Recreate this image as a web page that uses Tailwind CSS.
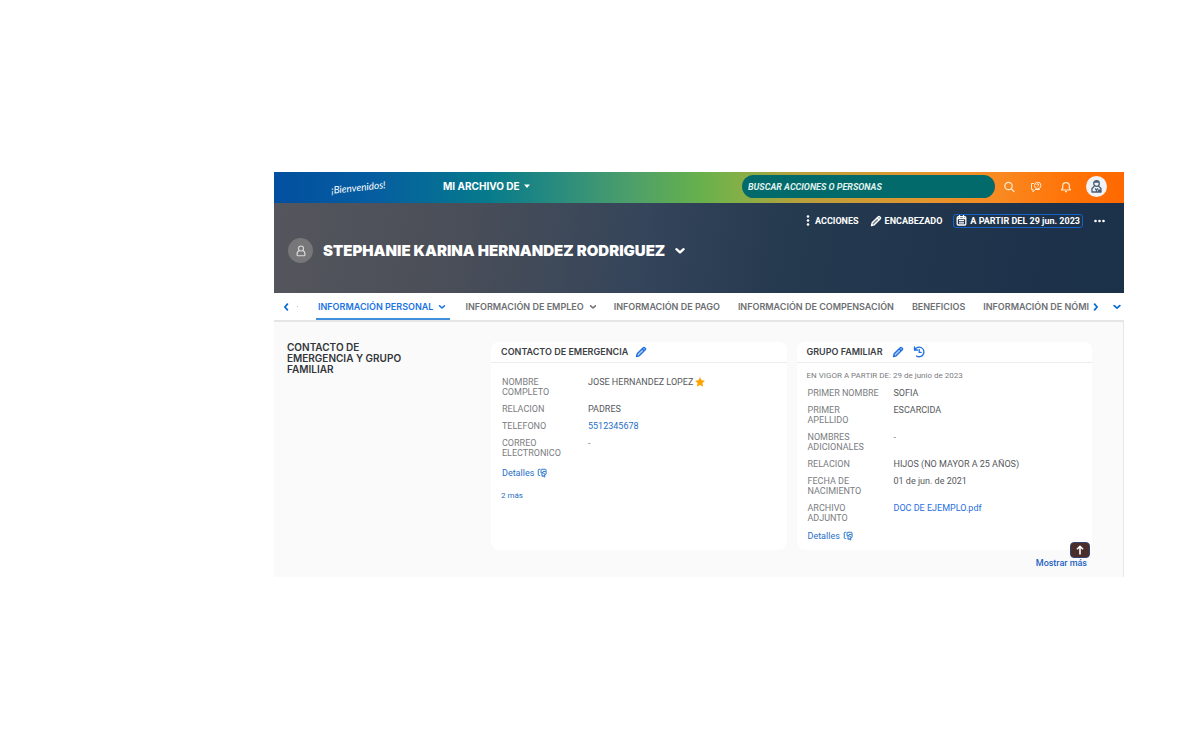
<!DOCTYPE html>
<html lang="es">
<head>
<meta charset="utf-8">
<title>Mi archivo de empleado</title>
<script src="https://cdn.jsdelivr.net/npm/@tailwindcss/browser@4"></script>
</head>
<body class="bg-white font-['Roboto',sans-serif] text-[9px] leading-[10px] text-[#4a4d52]">
<svg class="hidden">
  <symbol id="pencil" viewBox="0 0 16 16"><path d="M2 14l.9-3.600L11 2.300a1.300 1.300 0 0 1 1.900 0l.8.8a1.300 1.300 0 0 1 0 1.900L5.600 13.100z" fill="currentColor" fill-opacity=".35" stroke="currentColor" stroke-width="1.800" stroke-linejoin="round"/><path d="M9.500 3.800l2.700 2.700" fill="none" stroke="currentColor" stroke-width="1.800"/></symbol>
  <symbol id="down" viewBox="0 0 10 10"><path d="M3 4l2 1.800L7 4" fill="none" stroke="currentColor" stroke-width="1.300" stroke-linecap="round" stroke-linejoin="round"/></symbol>
  <symbol id="details" viewBox="0 0 16 16"><path d="M5 12H3.500A1.500 1.500 0 0 1 2 10.500v-7A1.500 1.500 0 0 1 3.500 2H5M7 2h6a1.500 1.500 0 0 1 1.500 1.500V10M6.500 2v6.500M9.500 5.500h4.500M8 6.500v7l2-1.500 1.300 2.500 1.500-.8-1.300-2.400 2.500-.5z" fill="none" stroke="currentColor" stroke-width="1.500" stroke-linejoin="round"/></symbol>
</svg>
<main class="pt-[172px] pr-[76px] pl-[274px]">
  <header class="flex h-[31px] items-center pr-[17px] pb-[2px] pl-[57px] text-white" style="background-image:linear-gradient(90deg,#024f9f 0%,#065ea0 12%,#067a8c 25%,#2c8d7d 34%,#4d9f6a 42%,#66b04c 50%,#7fb048 54%,#b8a03c 62%,#e2962f 76%,#f88a22 85%,#ff7409 93%,#ff6800 100%)">
    <a href="#" class="w-[112px] shrink-0"><span class="inline-block -rotate-6 font-['Lato',sans-serif] text-[10px] leading-[14px] italic">¡Bienvenidos!</span></a>
    <button type="button" class="flex shrink-0 items-center gap-1 pb-[2px] font-['Inter',sans-serif] text-[10px] font-bold">MI ARCHIVO DE
      <svg class="h-[6px] w-[6px]" viewBox="0 0 6 6"><path d="M0 1.500h6L3 5z" fill="currentColor"/></svg></button>
    <input type="search" aria-label="Buscar acciones o personas" placeholder="BUSCAR ACCIONES O PERSONAS" class="ml-auto h-[23px] w-[253px] rounded-full bg-[#036a6b] px-[6px] font-['Roboto',sans-serif] text-[9px] font-bold italic text-white placeholder:text-[#e0f2ef]">
    <button type="button" aria-label="Buscar" class="ml-[8px]"><svg class="h-3 w-3" viewBox="0 0 12 12" fill="none" stroke="#ffecd2" stroke-width="1.200" stroke-linecap="round"><circle cx="5.500" cy="5" r="3.700"/><path d="M8.300 7.800L11 10.500"/></svg></button>
    <button type="button" aria-label="Ayuda" class="ml-[15px]"><svg class="h-3 w-3" viewBox="0 0 12 12" fill="none" stroke="#ffecd2" stroke-width="1" stroke-linejoin="round"><path d="M4 2.500H1.500v6H3v2.300l2.200-2.300h4.300V8"/><circle cx="7.700" cy="4.500" r="3.200"/><path d="M6.700 3.800a1 1 0 1 1 1.500 1l-.5.800"/></svg></button>
    <button type="button" aria-label="Notificaciones" class="ml-[18px]"><svg class="h-3 w-3" viewBox="0 0 12 12" fill="none" stroke="#ffecd2" stroke-width="1.200" stroke-linejoin="round"><path d="M1.500 9h9L9.300 7.200V5a3.300 3.300 0 0 0-6.600 0v2.200zM5 10.700h2"/></svg></button>
    <button type="button" aria-label="Mi perfil" class="ml-[14px] flex h-[21px] w-[21px] items-center justify-center rounded-full bg-[#f1f2f5] text-[#475e75]"><svg class="h-[15px] w-[15px]" viewBox="0 0 15 15" fill="none" stroke="currentColor" stroke-width="1.300" stroke-linejoin="round"><circle cx="7.500" cy="4.500" r="2.800"/><path d="M5.500 7L3 9.500V13h9V9.500L9.500 7M6 9.500l1.500 1.500L9 9.500M7.500 11v2"/><path d="M4.800 3.800h5.400v-1L7.500 1.500 4.800 2.800zM9 10.500h3V13H9z" fill="currentColor" stroke="none"/></svg></button>
  </header>

  <section class="flex h-[90px] flex-col text-white" style="background-image:linear-gradient(100deg,#55565d 0%,#4a4e58 22%,#33445a 45%,#25394f 60%,#1b3049 100%)">
    <div class="mt-[10px] flex h-[15px] items-center justify-end gap-[11px] pr-[19px] font-bold">
      <button type="button" class="flex items-center gap-[5px]"><svg class="h-[11px] w-[4px]" viewBox="0 0 4 11" fill="currentColor"><circle cx="2" cy="1.500" r="1.300"/><circle cx="2" cy="5.500" r="1.300"/><circle cx="2" cy="9.500" r="1.300"/></svg>ACCIONES</button>
      <button type="button" class="flex items-center gap-[3px]"><svg class="h-3 w-3"><use href="#pencil"/></svg>ENCABEZADO</button>
      <button type="button" class="flex h-[14px] items-center gap-[3px] rounded-[3px] border border-[#1463c9] px-[2px]"><svg class="h-[11px] w-[11px]" viewBox="0 0 11 11" fill="none" stroke="currentColor" stroke-width="1.300"><rect x="1.200" y="1.700" width="8.600" height="8.300" rx="1"/><path d="M1 3.500h9M3.500 0v3M7.500 0v3M3 5.700h5M3 7.800h5"/></svg>A PARTIR DEL 29 jun. 2023</button>
      <button type="button" aria-label="Más acciones"><svg class="h-1 w-[11px]" viewBox="0 0 11 4" fill="currentColor"><circle cx="1.500" cy="2" r="1.300"/><circle cx="5.500" cy="2" r="1.300"/><circle cx="9.500" cy="2" r="1.300"/></svg></button>
    </div>
    <div class="mt-[10px] flex items-center pl-[14px]">
      <span class="flex h-[25px] w-[25px] items-center justify-center rounded-full bg-[#777779]"><svg class="h-3 w-3" viewBox="0 0 12 12" fill="none" stroke="#dcdcdc" stroke-width="1.100"><circle cx="6" cy="3.500" r="2.500"/><path d="M4.500 5.500C2.800 6 2 7.500 2 9.500c0 .8.300 1.300 1 1.300h6c.700 0 1-.5 1-1.300 0-2-.8-3.500-2.500-4"/></svg></span>
      <h1 class="ml-[10px] font-['Inter',sans-serif] text-[15px] leading-[20px] font-black">STEPHANIE KARINA HERNANDEZ RODRIGUEZ</h1>
      <button type="button" aria-label="Cambiar empleado" class="ml-[6px]"><svg class="h-[18px] w-[18px]"><use href="#down"/></svg></button>
    </div>
  </section>

  <nav aria-label="Secciones" class="flex h-[29px] items-center border-b-2 border-[#e4e5e7] bg-white font-['Inter',sans-serif] font-semibold text-[#6d6f73]">
    <button type="button" aria-label="Anterior" class="ml-[5px] text-[#0a6ed1]"><svg class="h-[14px] w-[14px] rotate-90"><use href="#down"/></svg></button>
    <span class="ml-[4px] h-px w-px bg-[#b9bbbf]"></span>
    <div class="ml-[18px] flex h-full min-w-0 flex-1 gap-[15px] overflow-hidden whitespace-nowrap">
      <a href="#" aria-current="page" class="flex shrink-0 items-center gap-[3px] border-b-2 border-[#3f8fdc] px-[2px] pt-[3px] text-[#1b74e4]">INFORMACIÓN PERSONAL<svg class="h-3 w-3"><use href="#down"/></svg></a>
      <a href="#" class="flex shrink-0 items-center gap-[3px] pt-px">INFORMACIÓN DE EMPLEO<svg class="h-3 w-3"><use href="#down"/></svg></a>
      <a href="#" class="flex shrink-0 items-center pt-px pr-[3px]">INFORMACIÓN DE PAGO</a>
      <a href="#" class="flex shrink-0 items-center pt-px pr-[3px]">INFORMACIÓN DE COMPENSACIÓN</a>
      <a href="#" class="flex shrink-0 items-center pt-px pr-[3px]">BENEFICIOS</a>
      <a href="#" class="flex shrink-0 items-center pt-px">INFORMACIÓN DE NÓMI</a>
    </div>
    <button type="button" aria-label="Siguiente" class="text-[#0a6ed1]"><svg class="h-[14px] w-[14px] -rotate-90"><use href="#down"/></svg></button>
    <button type="button" aria-label="Todas las secciones" class="ml-[7px] text-[#0a6ed1]"><svg class="h-[14px] w-[14px]"><use href="#down"/></svg></button>
  </nav>

  <section class="relative flex items-start border-r border-[#e6e7e9] bg-[#fafafb] pt-[20px] pr-[31px] pb-[27px] pl-[13px]">
    <h2 class="w-[204px] shrink-0 pr-[80px] font-['Inter',sans-serif] text-[10px] leading-[11px] font-semibold text-[#32363a]">CONTACTO DE EMERGENCIA Y GRUPO FAMILIAR</h2>
    <div class="grid flex-1 grid-cols-2 gap-[10px]">
      <article class="rounded-lg bg-white">
        <div class="flex h-[21px] items-center gap-[7px] border-b border-[#ececee] px-[10px]"><h3 class="font-['Inter',sans-serif] font-semibold text-[#3c4045]">CONTACTO DE EMERGENCIA</h3><button type="button" aria-label="Editar contacto" class="text-[#1f6fe0]"><svg class="h-3 w-3"><use href="#pencil"/></svg></button></div>
        <dl class="grid grid-cols-[86px_1fr] gap-y-[7px] px-[11px] pt-[14px] text-[#7a7d81]">
          <dt class="pr-[20px]">NOMBRE COMPLETO</dt><dd class="flex items-start gap-[2px] text-[#55585c]">JOSE HERNANDEZ LOPEZ<svg class="h-[10px] w-[10px]" viewBox="0 0 10 10"><path d="M5 0l1.500 3.300 3.500.4-2.600 2.400.7 3.600L5 7.900 1.900 9.700l.7-3.600L0 3.700l3.500-.4z" fill="#ffa200"/></svg></dd>
          <dt>RELACION</dt><dd class="text-[#55585c]">PADRES</dd>
          <dt>TELEFONO</dt><dd><a href="#" class="text-[#1f6fc8]">5512345678</a></dd>
          <dt class="pr-[20px]">CORREO ELECTRONICO</dt><dd>-</dd>
        </dl>
        <a href="#" class="mt-[10px] ml-[11px] flex w-fit items-center gap-[3px] text-[#1f6fc8]">Detalles<svg class="h-[10px] w-[10px]"><use href="#details"/></svg></a>
        <a href="#" class="mt-[13px] ml-[10px] block w-fit text-[8px] text-[#1f6fc8]">2 más</a>
      </article>
      <article class="rounded-lg bg-white pb-[9px]">
        <div class="flex h-[21px] items-center gap-[9px] border-b border-[#ececee] px-[10px]"><h3 class="font-['Inter',sans-serif] font-semibold text-[#3c4045]">GRUPO FAMILIAR</h3><button type="button" aria-label="Editar grupo familiar" class="text-[#1f6fe0]"><svg class="h-3 w-3"><use href="#pencil"/></svg></button><button type="button" aria-label="Historial" class="text-[#1f6fe0]"><svg class="h-3 w-3" viewBox="0 0 12 12" fill="none" stroke="currentColor" stroke-width="1.300" stroke-linecap="round"><path d="M1.500 1v3h3M1.800 3.800A4.800 4.800 0 1 1 3.500 10M6.200 3.500v2.800h2"/></svg></button></div>
        <p class="px-[10px] pt-[8px] text-[8px] text-[#7a7d81]">EN VIGOR A PARTIR DE: 29 de junio de 2023</p>
        <dl class="grid grid-cols-[86px_1fr] gap-y-[7px] px-[11px] pt-[7px] text-[#7a7d81]">
          <dt>PRIMER NOMBRE</dt><dd class="text-[#55585c]">SOFIA</dd>
          <dt class="pr-[20px]">PRIMER APELLIDO</dt><dd class="text-[#55585c]">ESCARCIDA</dd>
          <dt class="pr-[20px]">NOMBRES ADICIONALES</dt><dd>-</dd>
          <dt>RELACION</dt><dd class="text-[#55585c]">HIJOS (NO MAYOR A 25 AÑOS)</dd>
          <dt class="pr-[20px]">FECHA DE NACIMIENTO</dt><dd class="text-[#55585c]">01 de jun. de 2021</dd>
          <dt class="pr-[20px]">ARCHIVO ADJUNTO</dt><dd><a href="#" class="text-[#1f6fe0]">DOC DE EJEMPLO.pdf</a></dd>
        </dl>
        <a href="#" class="mt-[8px] ml-[11px] flex w-fit items-center gap-[3px] text-[#1f6fc8]">Detalles<svg class="h-[10px] w-[10px]"><use href="#details"/></svg></a>
      </article>
    </div>
    <a href="#" class="absolute right-[36px] bottom-[9px] font-medium text-[#1f62c4]">Mostrar más</a>
    <button type="button" aria-label="Volver arriba" class="absolute right-[33px] bottom-[19px] flex h-4 w-5 items-center justify-center rounded-[4px] border border-[#37456b] bg-[#4a2e2c] text-white"><svg class="h-[10px] w-[10px]" viewBox="0 0 10 10"><path d="M5 9.500V1.500M2 4.300l3-3 3 3" fill="none" stroke="currentColor" stroke-width="1.600"/></svg></button>
  </section>
</main>
</body>
</html>
